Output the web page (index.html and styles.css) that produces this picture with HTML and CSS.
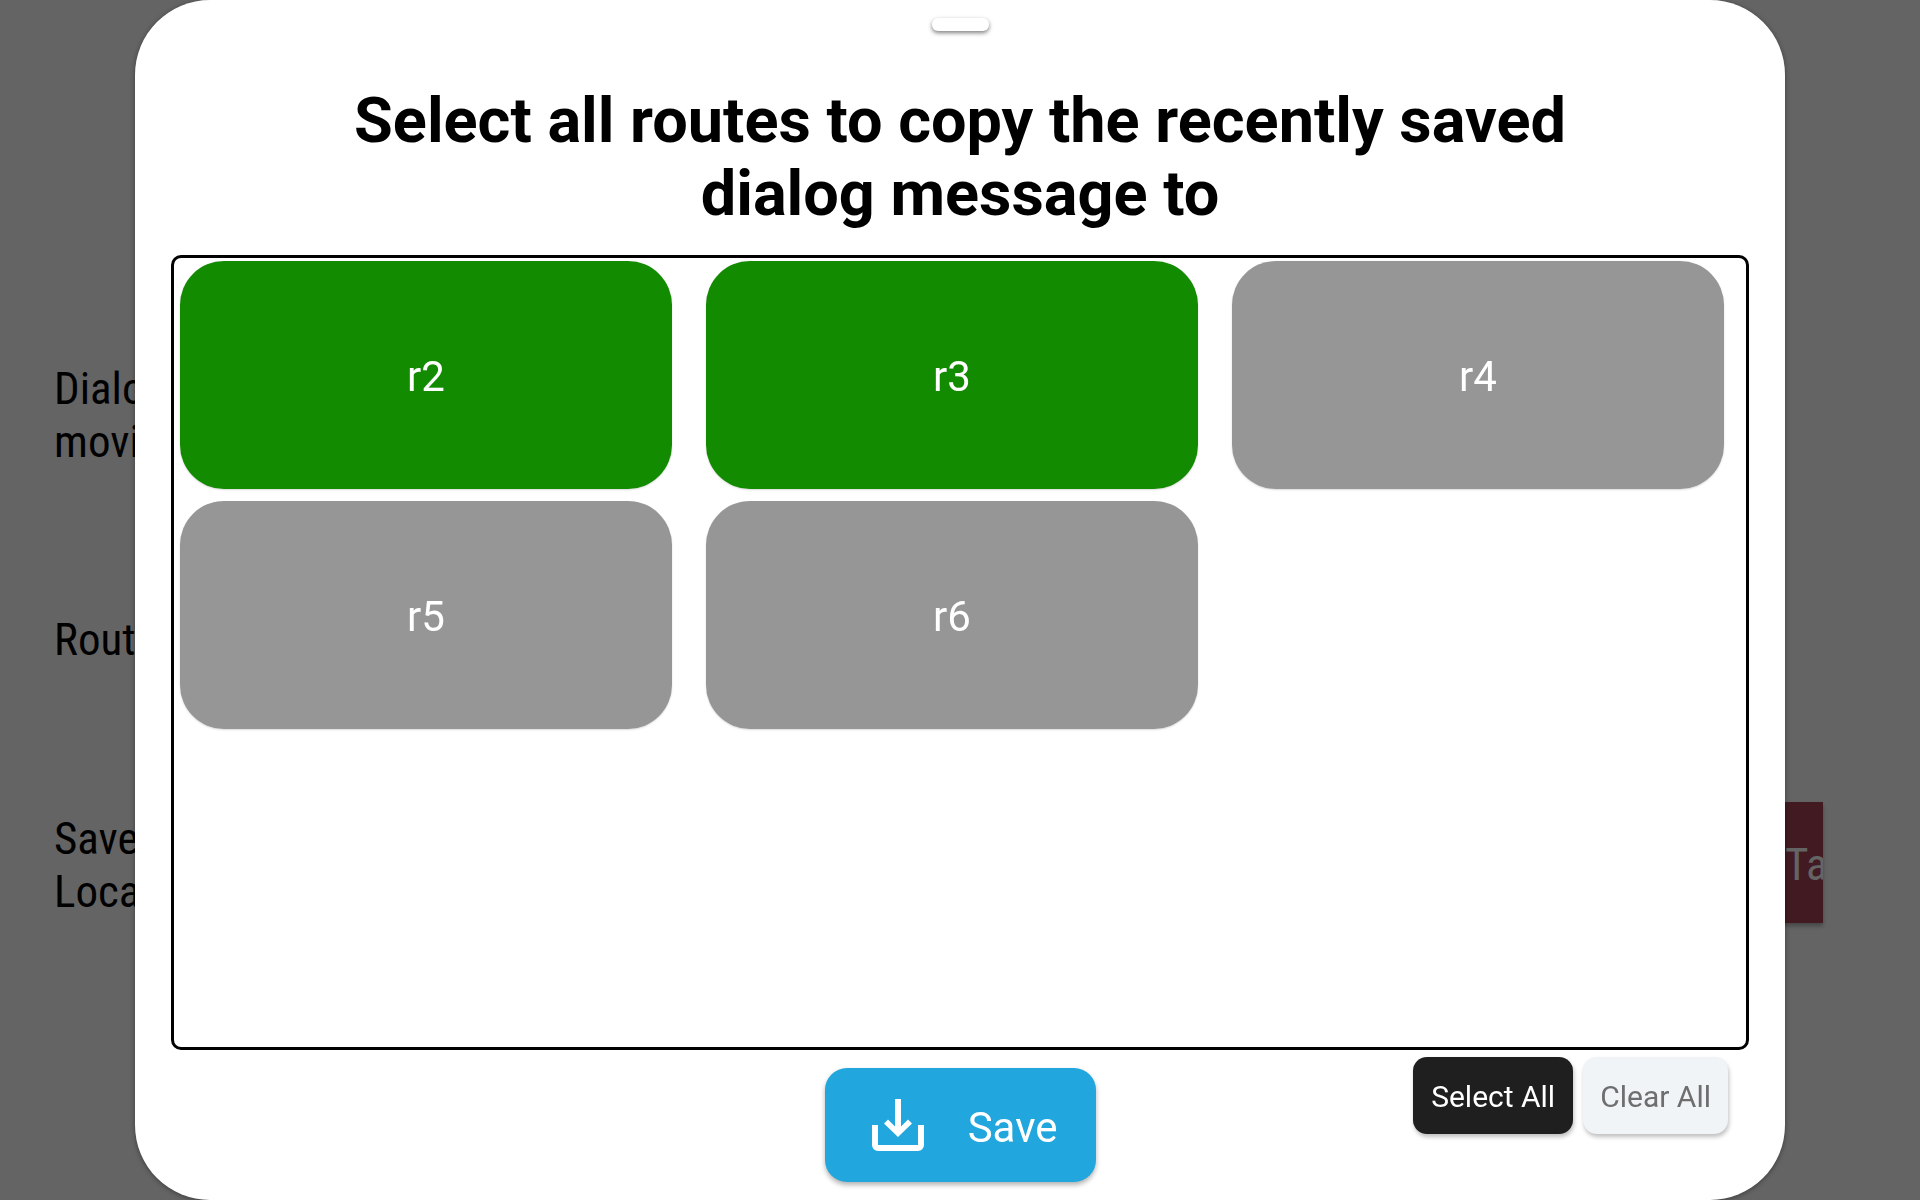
FILE: index.html
```html
<!DOCTYPE html>
<html lang="en">
<head>
<meta charset="utf-8">
<meta name="viewport" content="width=device-width, initial-scale=1">
<title>Copy dialog message</title>
<link rel="stylesheet" href="styles.css">
</head>
<body>
<main class="settings">
  <div class="setting"><span class="setting-name">Dialog<br>moving</span></div>
  <div class="setting"><span class="setting-name">Route</span></div>
  <div class="setting">
    <span class="setting-name">Save<br>Locat</span>
    <button class="setting-action" type="button">Ta</button>
  </div>
</main>
<div class="backdrop">
  <section class="dialog" role="dialog" aria-modal="true" aria-labelledby="dialog-title">
    <div class="handle"></div>
    <h1 class="title" id="dialog-title">Select all routes to copy the recently saved dialog message to</h1>
    <div class="routes">
      <button class="route" type="button" aria-pressed="true">r2</button>
      <button class="route" type="button" aria-pressed="true">r3</button>
      <button class="route" type="button" aria-pressed="false">r4</button>
      <button class="route" type="button" aria-pressed="false">r5</button>
      <button class="route" type="button" aria-pressed="false">r6</button>
    </div>
    <footer class="footer">
      <button class="save" type="button">
        <svg class="save-icon" viewBox="0 0 52 52" aria-hidden="true">
          <path fill="currentColor" d="M23 0h6v27.500l7-7 4 4L26 38 12 24.500l4-4 7 7z"/>
          <path fill="currentColor" d="M0 26h6v20h40V26h6v20a6 6 0 0 1-6 6H6a6 6 0 0 1-6-6z"/>
        </svg>
        <span class="save-label">Save</span>
      </button>
      <div class="bulk">
        <button class="bulk-button select-all" type="button">Select All</button>
        <button class="bulk-button clear-all" type="button">Clear All</button>
      </div>
    </footer>
  </section>
</div>
</body>
</html>
```
FILE: styles.css
```css
* {
  box-sizing: border-box;
}

body {
  margin: 0;
  background: #646464;
  color: #000;
  font-family: Roboto, "Liberation Sans", sans-serif;
}

button {
  margin: 0;
  padding: 2px 0 0;
  border: 0;
  font-family: inherit;
  cursor: pointer;
}

.settings {
  display: grid;
  grid-auto-rows: 225px;
  padding: 302px 97px 0 54px;
  font-family: "Roboto Condensed", Roboto, "Liberation Sans", sans-serif;
  font-size: 45px;
  line-height: 53px;
}

.setting {
  display: flex;
  align-items: center;
  justify-content: space-between;
}

.setting-action {
  width: 240px;
  height: 121px;
  margin-bottom: 4px;
  padding: 4px 0 0 202px;
  overflow: hidden;
  background: #421a22;
  color: #646464;
  font-size: 45px;
  text-align: left;
  box-shadow: 0 3px 4px rgba(0, 0, 0, 0.3);
}

.backdrop {
  position: fixed;
  inset: 0;
  display: flex;
  padding: 0 135px;
}

.dialog {
  flex: 1;
  display: flex;
  flex-direction: column;
  padding: 18px 36px 0;
  border-radius: 75px;
  background: #fff;
  box-shadow: 0 1px 5px rgba(0, 0, 0, 0.4);
}

.handle {
  align-self: center;
  width: 57px;
  height: 13px;
  border-radius: 6px;
  background: #fff;
  box-shadow: 0 2px 4px rgba(0, 0, 0, 0.5);
}

.title {
  margin: 53px 0 25px;
  padding: 0 100px;
  font-size: 63px;
  line-height: 73px;
  text-align: center;
}

.routes {
  flex: 1;
  display: grid;
  grid-template-columns: repeat(3, 1fr);
  grid-auto-rows: 228px;
  gap: 12px 34px;
  padding: 3px 22px 3px 6px;
  border: 3px solid #000;
  border-radius: 10px;
}

.route {
  border-radius: 44px;
  background: #969696;
  color: #fff;
  font-size: 42px;
  box-shadow: 0 1px 2px rgba(0, 0, 0, 0.15);
}

.route[aria-pressed="true"] {
  background: #128b00;
}

.footer {
  display: grid;
  grid-template-columns: 1fr auto 1fr;
  align-items: start;
  height: 150px;
  padding-right: 21px;
  padding-left: 21px;
}

.save {
  grid-column: 2;
  display: flex;
  align-items: center;
  justify-content: space-between;
  width: 271px;
  height: 114px;
  margin-top: 18px;
  padding: 0 38px 0 47px;
  border-radius: 22px;
  background: #21a6dd;
  color: #fff;
  font-size: 42px;
  box-shadow: 0 3px 5px rgba(0, 0, 0, 0.3);
}

.save-icon {
  width: 52px;
  height: 52px;
}

.save-label {
  padding-top: 4px;
}

.bulk {
  display: flex;
  justify-content: flex-end;
  gap: 10px;
  padding-top: 7px;
}

.bulk-button {
  height: 77px;
  padding: 2px 18px 0;
  border-radius: 14px;
  font-size: 30px;
  white-space: nowrap;
  box-shadow: 1px 3px 4px rgba(0, 0, 0, 0.25);
}

.select-all {
  background: #1f1f1f;
  color: #fff;
}

.clear-all {
  padding-right: 17px;
  padding-left: 17px;
  background: #f0f4f7;
  color: #6e6e6e;
}
```
